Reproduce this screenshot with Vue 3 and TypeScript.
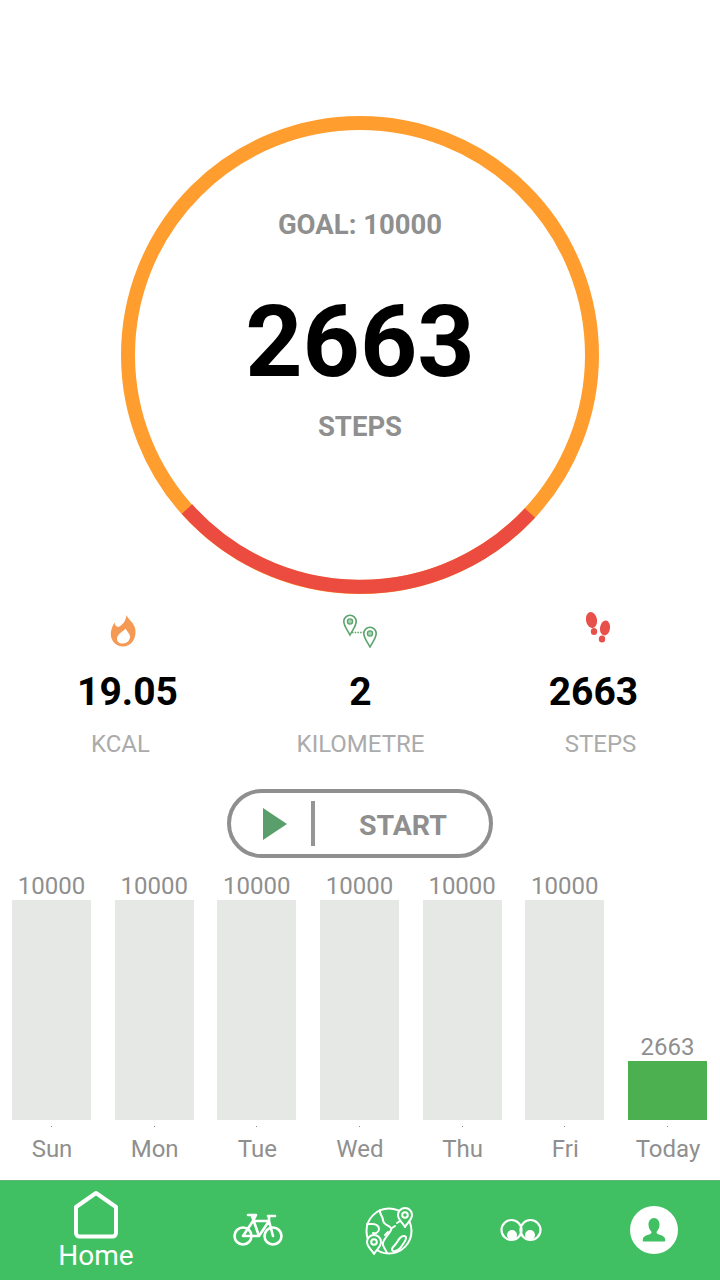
<script setup lang="ts">
interface Day {
  label: string
  value: number
  today?: boolean
}

const goal = 10000
const days: Day[] = [
  { label: 'Sun', value: 10000 },
  { label: 'Mon', value: 10000 },
  { label: 'Tue', value: 10000 },
  { label: 'Wed', value: 10000 },
  { label: 'Thu', value: 10000 },
  { label: 'Fri', value: 10000 },
  { label: 'Today', value: 2663, today: true }
]

const barHeight = (value: number) => `${(value / goal) * 220}px`
</script>

<template>
  <div class="page">
    <section class="ring">
      <svg class="ring-svg" width="478" height="478" viewBox="0 0 478 478">
        <circle cx="239" cy="239" r="232" fill="none" stroke="#ff9d2e" stroke-width="14" />
        <path d="M66 393A232 232 0 0 0 409 397" fill="none" stroke="#ec4c3f" stroke-width="14" />
      </svg>
      <div class="ring-text">
        <div class="goal">GOAL: 10000</div>
        <div class="count">2663</div>
        <div class="unit">STEPS</div>
      </div>
    </section>

    <section class="stats">
      <div class="stat">
        <svg class="stat-icon flame" width="26" height="32" viewBox="0 0 26 32">
          <path fill="#f59a55" fill-rule="evenodd" d="M16.500 0c1 4 8.500 8 9 15.500C26 25 20.500 31.500 13 31.500 6 31.500 .5 25.500 .8 18.500 1 14 3 10 4.500 7.500c.5 2.500 1.500 4 3.500 4.500C12 11 16 6 16.500 0ZM15.500 13.500c-1.500 2.500-8.500 5-8.500 10.500 0 3 3 4.800 6 4.600 4 0 7-3 7-7-.2-3.500-3.500-5.500-4.500-8.100Z" />
        </svg>
        <div class="stat-value">19.05</div>
        <div class="stat-label kcal">KCAL</div>
      </div>
      <div class="stat">
        <svg class="stat-icon" width="38" height="34" viewBox="0 0 38 34" fill="none" stroke="#5ba46c" stroke-width="1.600">
          <path d="M8 21C5.500 16 1.800 12 1.800 7.500a6.200 6.200 0 0 1 12.400 0C14.200 12 10.500 16 8 21Z" />
          <circle cx="8" cy="7.500" r="2.600" fill="#a9d1b3" stroke-width="1.300" />
          <path d="M28 33c-2.500-5-6.200-9-6.200-13.500a6.200 6.200 0 0 1 12.400 0c0 4.500-3.700 8.500-6.200 13.500Z" />
          <circle cx="28" cy="19.500" r="2.600" fill="#a9d1b3" stroke-width="1.300" />
          <path d="M10 18.500h12" stroke-dasharray="1.500 1.200" />
        </svg>
        <div class="stat-value">2</div>
        <div class="stat-label">KILOMETRE</div>
      </div>
      <div class="stat">
        <svg class="stat-icon feet" width="24" height="30" viewBox="0 0 24 30" fill="#e8504c">
          <ellipse cx="5.500" cy="8" rx="5.500" ry="8" transform="rotate(-10 5.500 8)" />
          <ellipse cx="8" cy="19.500" rx="3.200" ry="3.500" />
          <ellipse cx="19" cy="16" rx="5" ry="7.500" transform="rotate(8 19 16)" />
          <ellipse cx="16" cy="27" rx="3.200" ry="3.500" />
        </svg>
        <div class="stat-value">2663</div>
        <div class="stat-label steps">STEPS</div>
      </div>
    </section>

    <button class="start" type="button">
      <span class="start-play"></span>
      <span class="start-divider"></span>
      <span class="start-text">START</span>
    </button>

    <section class="chart">
      <div v-for="day in days" :key="day.label" class="col">
        <div class="col-plot">
          <div class="col-value">{{ day.value }}</div>
          <div class="col-bar" :class="{ today: day.today }" :style="{ height: barHeight(day.value) }"></div>
        </div>
        <div class="col-tick"></div>
        <div class="col-label">{{ day.label }}</div>
      </div>
    </section>

    <nav class="nav">
      <div class="nav-item">
        <svg width="46" height="50" viewBox="0 0 46 50" fill="none" stroke="#fff" stroke-width="4" stroke-linejoin="round">
          <path d="M23 3 43 17V43a3.500 3.500 0 0 1-3.500 3.500H6.500A3.500 3.500 0 0 1 3 43V17Z" />
        </svg>
        <span class="nav-label">Home</span>
      </div>
      <div class="nav-item">
        <svg width="50" height="34" viewBox="0 0 50 34" fill="none" stroke="#fff" stroke-width="2.600" stroke-linejoin="round" stroke-linecap="round">
          <circle cx="10" cy="23" r="8.500" />
          <circle cx="40" cy="23" r="8.500" />
          <path d="M10 23 20 8H36L26 23ZM10 23H26L19 3M36 8 40 23M35 3H42M36 3 36 8M15 2H23L20 8" />
        </svg>
      </div>
      <div class="nav-item">
        <svg width="52" height="52" viewBox="0 0 52 52" fill="none" stroke="#fff" stroke-width="2" stroke-linejoin="round" stroke-linecap="round">
          <circle cx="26" cy="27" r="22.500" />
          <path d="M17 6c-1 4 3 6 3 10 0 4 4 5 7 7 3 2 0 5-3 9-3 4-5 6-4 9 .8 3 3 5 4 8" />
          <path d="M4 20h6c3 0 6 2 6 5 0 3-3 5-6 4" />
          <path d="M43 33c1 2-2 6-5 10-2 3-6 5-8 4-2-1-1-3 1-5 3-3 4-6 6-8 2-2 5-3 6-1Z" />
          <path d="M22 31l3-3M29 24l3-2M34 19l3-2" />
          <path d="M42 23c-2-4-7-7-7-12a7 7 0 0 1 14 0c0 5-5 8-7 12Z" fill="#41c063" />
          <circle cx="42" cy="11" r="2.800" />
          <path d="M11 50C9 46 4 43 4 38a7 7 0 0 1 14 0c0 5-5 8-7 12Z" fill="#41c063" />
          <circle cx="11" cy="38" r="2.800" />
        </svg>
      </div>
      <div class="nav-item">
        <svg width="42" height="24" viewBox="0 0 42 24" fill="none" stroke="#fff" stroke-width="2.200">
          <ellipse cx="11.500" cy="12" rx="10" ry="10" />
          <ellipse cx="30.500" cy="12" rx="10" ry="10" />
          <circle cx="12" cy="17" r="5" fill="#fff" stroke="none" />
          <circle cx="30" cy="17" r="5" fill="#fff" stroke="none" />
        </svg>
      </div>
      <div class="nav-item">
        <svg width="48" height="48" viewBox="0 0 48 48">
          <circle cx="24" cy="24" r="24" fill="#fff" />
          <path fill="#41c063" d="M24 12c3.500 0 5.500 3 5.500 6.500 0 3-1.200 5.500-2.800 7-.4 1 0 2 1 2.500 3.500 1.200 6.800 2.300 7.300 4.500.2 1 .2 2 .2 3H12.800c0-1 0-2 .2-3 .5-2.200 3.800-3.300 7.300-4.500 1-.5 1.400-1.500 1-2.500-1.600-1.500-2.800-4-2.800-7C18.500 15 20.500 12 24 12Z" />
        </svg>
      </div>
    </nav>
  </div>
</template>

<style scoped>
.page {
  width: 720px;
  height: 1280px;
  background: #fff;
  display: flex;
  flex-direction: column;
  font-family: Roboto, 'Liberation Sans', sans-serif;
  overflow: hidden;
}

.ring {
  position: relative;
  align-self: center;
  width: 478px;
  height: 478px;
  margin-top: 116px;
}

.ring-svg {
  display: block;
}

.ring-text {
  position: absolute;
  inset: 0;
  display: flex;
  flex-direction: column;
  align-items: center;
}

.goal,
.unit {
  font-size: 27.5px;
  font-weight: 700;
  color: #8f8f8f;
  line-height: 32px;
}

.goal {
  margin-top: 93px;
}

.count {
  margin-top: 43px;
  font-size: 100px;
  font-weight: 700;
  line-height: 115px;
  color: #000;
}

.unit {
  margin-top: 12px;
}

.stats {
  display: grid;
  grid-template-columns: repeat(3, 233px);
  padding: 0 10px 0 11px;
  height: 195px;
}

.stat {
  display: flex;
  flex-direction: column;
  align-items: center;
}

.stat-icon {
  display: block;
  margin-top: 20px;
  height: 34px;
}

.flame {
  margin-left: -10px;
}

.feet {
  margin-top: 16px;
  margin-bottom: 4px;
  margin-left: 8px;
}

.stat-value {
  margin-top: 21px;
  font-size: 39px;
  font-weight: 700;
  line-height: 46px;
  color: #000;
}

.stat-label {
  margin-top: 15px;
  font-size: 24px;
  line-height: 28px;
  color: #ababab;
}

.kcal {
  margin-left: -14px;
}

.steps {
  margin-left: 14px;
}

.start {
  align-self: center;
  box-sizing: border-box;
  width: 266px;
  height: 69px;
  padding: 0;
  border: 4px solid #8f8f8f;
  border-radius: 35px;
  background: #fff;
  display: flex;
  align-items: center;
  font-family: inherit;
}

.start-play {
  margin-left: 32px;
  width: 0;
  height: 0;
  border-left: 24px solid #5a9e6b;
  border-top: 16px solid transparent;
  border-bottom: 16px solid transparent;
}

.start-divider {
  margin-left: 24px;
  width: 4px;
  height: 45px;
  background: #959595;
}

.start-text {
  margin-left: 44px;
  padding-top: 3px;
  font-size: 28.5px;
  font-weight: 700;
  color: #8f8f8f;
}

.chart {
  display: grid;
  grid-template-columns: repeat(7, 79px);
  column-gap: 23.67px;
  padding: 0 12px;
  height: 322px;
}

.col {
  display: flex;
  flex-direction: column;
  align-items: center;
}

.col-plot {
  width: 100%;
  height: 262px;
  display: flex;
  flex-direction: column;
  justify-content: flex-end;
  align-items: center;
}

.col-value {
  font-size: 24px;
  line-height: 28px;
  color: #8f8f8f;
}

.col-bar {
  width: 100%;
  background: #e6e8e6;
}

.col-bar.today {
  background: #4caf50;
}

.col-tick {
  width: 1px;
  height: 1px;
  margin-top: 6px;
  background: #8a8a8a;
}

.col-label {
  margin-top: 8px;
  padding-left: 1px;
  font-size: 24px;
  line-height: 28px;
  color: #8f8f8f;
}

.nav {
  flex: 1;
  background: #41c063;
  box-shadow: inset 0 1px 0 #5fb676;
  display: grid;
  grid-template-columns: 192px 132px 130px 134px 132px;
}

.nav-item {
  display: flex;
  flex-direction: column;
  align-items: center;
  justify-content: center;
}

.nav-item svg {
  display: block;
}

.nav-label {
  margin-top: 2px;
  font-size: 28px;
  line-height: 28px;
  color: #fff;
}
</style>

<style>
html,
body {
  margin: 0;
  background: #fff;
}
</style>
